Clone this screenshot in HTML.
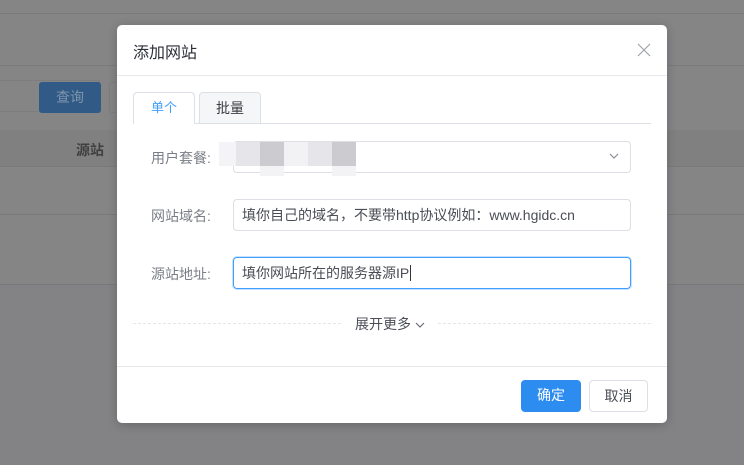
<!DOCTYPE html>
<html><head><meta charset="utf-8"><style>
*{box-sizing:border-box;margin:0;padding:0}
body{width:744px;height:465px;position:relative;overflow:hidden;background:#858586;font-family:"Liberation Sans","Noto Sans CJK SC",sans-serif;font-size:13px}
.abs{position:absolute}
.dlg{left:117px;top:25px;width:550px;height:398px;background:#fff;border-radius:5px;box-shadow:0 2px 10px rgba(0,0,0,.2)}
.inp{position:absolute;left:116px;width:398px;height:32px;border:1px solid #dcdfe6;border-radius:4px;color:#4a4d55;font-size:14px;line-height:30px;padding-left:8px}
.lbl{position:absolute;left:34px;color:#7a7e86;font-size:14px}
.btn{position:absolute;top:355px;height:32px;border-radius:4px;font-size:14px;line-height:30px;text-align:center}
</style></head><body>
<div class="abs" style="left:0;top:13px;width:744px;height:1px;background:#7a7a7b"></div>
<div class="abs" style="left:0;top:65px;width:744px;height:1px;background:#7a7a7b"></div>
<div class="abs" style="left:0;top:80px;width:100px;height:32px;border:1px solid #7d7d7f;border-left:none"></div>
<div class="abs" style="left:39px;top:82px;width:62px;height:31px;background:#315a86;border-radius:3px;color:#7f95ad;text-align:center;line-height:31px;font-size:14px">查询</div>
<div class="abs" style="left:109px;top:82px;width:10px;height:31px;border:1px solid #7d7d7f;border-right:none;border-radius:3px 0 0 3px"></div>
<div class="abs" style="left:0;top:130px;width:744px;height:36px;background:#808081"></div>
<div class="abs" style="left:76px;top:140px;color:#404040;font-weight:bold;font-size:14px">源站</div>
<div class="abs" style="left:0;top:166px;width:744px;height:1px;background:#79797a"></div>
<div class="abs" style="left:0;top:214px;width:744px;height:1px;background:#79797a"></div>
<div class="abs" style="left:0;top:284px;width:744px;height:1px;background:#79797a"></div>
<div class="abs" style="left:0;top:285px;width:744px;height:180px;background:#838385"></div>
<div class="abs dlg">
<div class="abs" style="left:16px;top:14px;font-size:16px;color:#2b2f36">添加网站</div>
<svg class="abs" style="left:520px;top:18px" width="14" height="14" viewBox="0 0 14 14"><path d="M1 1L13 13M13 1L1 13" stroke="#a0a3a8" stroke-width="1.2"/></svg>
<div class="abs" style="left:0;top:50px;width:550px;height:1px;background:#e8e8ea"></div>
<div class="abs" style="left:16px;top:98px;width:518px;height:1px;background:#dcdfe6"></div>
<div class="abs" style="left:16px;top:67px;width:62px;height:32px;border:1px solid #dcdfe6;border-bottom:1px solid #fff;border-radius:4px 4px 0 0;background:#fff;color:#409eff;text-align:center;line-height:30px">单个</div>
<div class="abs" style="left:82px;top:67px;width:62px;height:32px;border:1px solid #dcdfe6;border-radius:4px 4px 0 0;background:#f5f6f8;color:#3a3d44;text-align:center;line-height:30px;font-size:14px">批量</div>
<div class="lbl" style="top:123px">用户套餐:</div>
<div class="inp" style="top:116px"></div>
<svg class="abs" style="left:492px;top:127px" width="10" height="8" viewBox="0 0 10 8"><path d="M1 2L5 6L9 2" stroke="#8c9096" fill="none" stroke-width="1.2"/></svg>
<div class="abs" style="left:102px;top:117px;width:17px;height:24px;background:#f4f4f6"></div>
<div class="abs" style="left:119px;top:117px;width:24px;height:24px;background:#e6e6ea"></div>
<div class="abs" style="left:143px;top:117px;width:24px;height:24px;background:#cbcbd0"></div>
<div class="abs" style="left:167px;top:117px;width:24px;height:24px;background:#f2f2f4"></div>
<div class="abs" style="left:191px;top:117px;width:24px;height:24px;background:#e6e6ea"></div>
<div class="abs" style="left:215px;top:117px;width:24px;height:24px;background:#cbcbd0"></div>
<div class="abs" style="left:143px;top:141px;width:24px;height:10px;background:#f3f3f5"></div>
<div class="abs" style="left:215px;top:141px;width:24px;height:10px;background:#f3f3f5"></div>
<div class="lbl" style="top:181px">网站域名:</div>
<div class="inp" style="top:174px">填你自己的域名，不要带http协议例如：www.hgidc.cn</div>
<div class="lbl" style="top:239px">源站地址:</div>
<div class="inp" style="top:232px;border-color:#409eff;box-shadow:0 0 0 1px #c6e2ff">填你网站所在的服务器源IP<span style="border-left:1px solid #333;margin-left:1px"></span></div>
<div class="abs" style="left:16px;top:298px;width:518px;border-top:1px dashed #e4e6ea"></div>
<div class="abs" style="left:226px;top:289px;width:94px;background:#fff;color:#4a4d55;text-align:center;font-size:14px">展开更多 <svg width="10" height="8" viewBox="0 0 10 8"><path d="M1 2L5 6L9 2" stroke="#6a6e76" fill="none" stroke-width="1.2"/></svg></div>
<div class="abs" style="left:0;top:341px;width:550px;height:1px;background:#e8e8ea"></div>
<div class="btn" style="left:404px;width:60px;background:#2d8cf0;color:#fff">确定</div>
<div class="btn" style="left:472px;width:59px;border:1px solid #dcdfe6;color:#4a4d55">取消</div>
</div>
</body></html>
